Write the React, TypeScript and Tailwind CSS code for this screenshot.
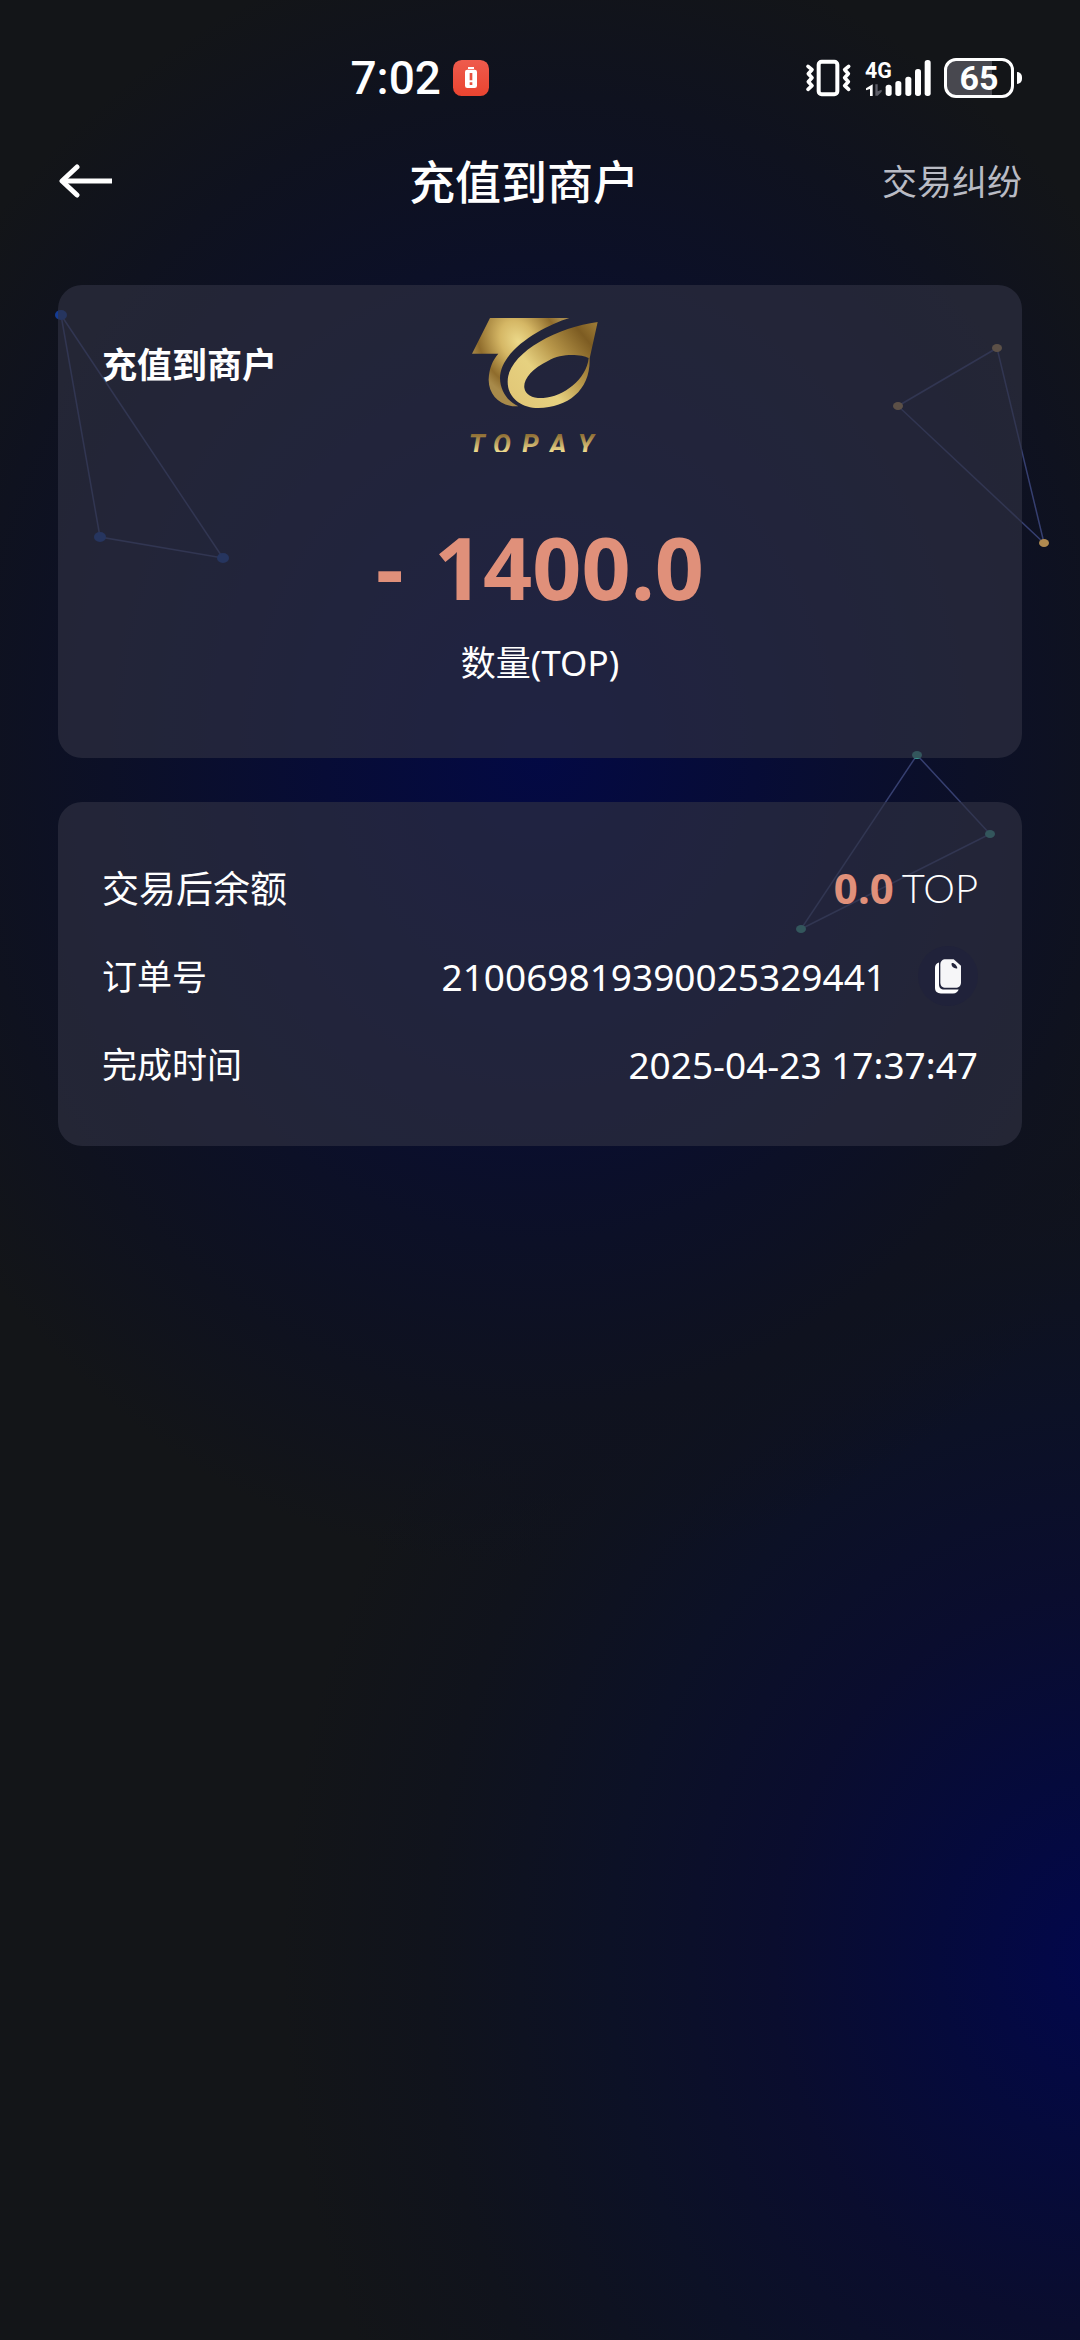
import type { ReactNode } from 'react';

function VibrateIcon() {
  return (
    <svg viewBox="70 54 141 120" className="h-10 w-[47px]" fill="none" stroke="#fff" aria-hidden="true">
      <rect x="111" y="65" width="56" height="98" rx="9" strokeWidth="12" />
      <path d="M79 79 L91 89 L80 101 L91 113 L80 125 L91 137 L79 148" strokeWidth="11" strokeLinejoin="round" strokeLinecap="round" />
      <path d="M201 79 L189 89 L200 101 L189 113 L200 125 L189 137 L201 148" strokeWidth="11" strokeLinejoin="round" strokeLinecap="round" />
    </svg>
  );
}

function SignalIcon() {
  return (
    <svg viewBox="245 54 204 120" className="h-10 w-[68px]" fill="#fff" aria-hidden="true">
      <text x="248" y="113" fontSize="64" fontWeight="700" fontFamily="Roboto, sans-serif">4G</text>
      <path d="M271 133 V168 H263 V147 L251 151 V145 Z" />
      <path d="M279 133 H286 V154 L298 149 V155 L286 167 H279 Z" fill="#5d5e68" />
      <rect x="310" y="134" width="18" height="34" rx="8" />
      <rect x="339" y="123" width="18" height="45" rx="8" />
      <rect x="369" y="110" width="18" height="58" rx="8" />
      <rect x="398" y="87" width="18" height="81" rx="8" />
      <rect x="427" y="60" width="18" height="108" rx="8" />
    </svg>
  );
}

function Battery() {
  return (
    <div className="flex items-center gap-[3px]">
      <div className="flex h-10 w-[70px] items-center justify-center rounded-xl border-[3px] border-white bg-linear-to-r from-[#48484f] from-70% to-transparent to-70% text-[34px] leading-none font-bold">
        65
      </div>
      <div className="h-3 w-[5px] rounded-r-full rounded-l-xs bg-white" />
    </div>
  );
}

function StatusBar() {
  return (
    <div className="flex h-[116px] items-end pb-[18px] font-['Roboto',sans-serif] text-white">
      <div className="flex h-10 w-1/2 items-center justify-end gap-3 pr-[51px]">
        <span className="text-[46px] leading-none font-medium">7:02</span>
        <svg viewBox="0 0 108 108" className="size-9" aria-hidden="true">
          <defs>
            <linearGradient id="alert" x1="0" y1="0" x2="0" y2="1">
              <stop offset="0" stopColor="#ee5b4d" />
              <stop offset="1" stopColor="#ea4430" />
            </linearGradient>
          </defs>
          <rect width="108" height="108" rx="26" fill="url(#alert)" />
          <path d="M45 21 H63 V27 H45 Z" fill="#fff" />
          <rect x="36" y="29" width="36" height="55" rx="7" fill="#fff" />
          <path d="M50 39 H58 V61 H50 Z M50 67 H58 V75 H50 Z" fill="#e8513f" />
        </svg>
      </div>
      <div className="flex w-1/2 items-center justify-end gap-3 pr-[58px]">
        <VibrateIcon />
        <SignalIcon />
        <Battery />
      </div>
    </div>
  );
}

function Header() {
  return (
    <header className="grid h-[130px] grid-cols-[1fr_auto_1fr] items-center px-[58px]">
      <button type="button" aria-label="返回" className="justify-self-start">
        <svg viewBox="0 0 54 34" className="h-[34px] w-[54px]" fill="none" stroke="#fff" strokeWidth="5" aria-hidden="true">
          <path d="M54 17 H5" />
          <path d="M19 3 L4 17 L19 31" strokeLinejoin="round" strokeLinecap="round" />
        </svg>
      </button>
      <h1 className="pr-8 text-[46px] leading-none font-medium">充值到商户</h1>
      <a href="#dispute" className="justify-self-end text-[35px] leading-none text-[#b9bbc4]">
        交易纠纷
      </a>
    </header>
  );
}

function Logo() {
  return (
    <svg viewBox="90 75 420 411" className="h-[137px] w-[140px]" role="img" aria-label="TOPAY">
      <defs>
        <radialGradient id="gold-t" gradientUnits="userSpaceOnUse" cx="235" cy="155" r="190" gradientTransform="translate(235 155) rotate(-30) scale(0.75 1) rotate(30) translate(-235 -155)">
          <stop offset="0" stopColor="#ecd98a" />
          <stop offset="0.35" stopColor="#d5b765" />
          <stop offset="0.8" stopColor="#8f6c2c" />
          <stop offset="1" stopColor="#a88a4a" />
        </radialGradient>
        <linearGradient id="gold-leaf" gradientUnits="userSpaceOnUse" x1="230" y1="330" x2="480" y2="120">
          <stop offset="0" stopColor="#e2c878" />
          <stop offset="0.3" stopColor="#e6d180" />
          <stop offset="0.55" stopColor="#b8974a" />
          <stop offset="0.85" stopColor="#7d5c22" />
          <stop offset="1" stopColor="#9a7834" />
        </linearGradient>
        <linearGradient id="gold-text" gradientUnits="userSpaceOnUse" x1="0" y1="434" x2="0" y2="486">
          <stop offset="0" stopColor="#8f6f35" />
          <stop offset="1" stopColor="#f0dd90" />
        </linearGradient>
      </defs>
      <path
        d="M150 84 H388 C310 108 180 180 180 265 C181 305 205 336 235 349 C185 351 145 318 146 268 C147 236 158 210 175 191 H96 Z"
        fill="url(#gold-t)"
      />
      <path
        fillRule="evenodd"
        d="M473 96 C350 112 203 190 203 275 C203 325 245 354 295 354 C385 353 452 300 449 205 Z M446 204 C425 193 365 188 325 212 C275 236 250 268 253 293 C256 315 280 326 310 324 C370 320 440 268 446 204 Z"
        fill="url(#gold-leaf)"
      />
      <text
        x="86 159 246 328 413"
        y="493"
        fontSize="80"
        fontWeight="700"
        fontStyle="italic"
        fontFamily="Roboto, sans-serif"
        fill="url(#gold-text)"
      >
        TOPAY
      </text>
    </svg>
  );
}

type Point = [number, number];

const constellations: { fill: string; rx: number; points: Point[] }[] = [
  { fill: '#143c94', rx: 6, points: [[61, 315], [100, 537], [223, 558]] },
  { fill: '#b08a50', rx: 5, points: [[997, 348], [898, 406], [1044, 543]] },
  { fill: '#3a9a8e', rx: 5, points: [[917, 755], [990, 834], [801, 929]] },
];

function Constellations() {
  return (
    <svg viewBox="0 0 1080 1000" className="pointer-events-none absolute inset-x-0 top-0 w-full" aria-hidden="true">
      {constellations.map(({ fill, rx, points }) => (
        <g key={fill}>
          <polygon points={points.join(' ')} fill="none" stroke="#363f70" strokeWidth="1.5" />
          {points.map(([x, y]) => (
            <ellipse key={x} cx={x} cy={y} rx={rx} ry={rx - 1} fill={fill} />
          ))}
        </g>
      ))}
    </svg>
  );
}

function Row({ label, children }: { label: string; children: ReactNode }) {
  return (
    <div className="group flex h-[88px] items-center justify-between">
      <dt className="text-[35px] leading-none group-first:text-[37px]">{label}</dt>
      <dd className="flex items-center text-[37px] leading-none">{children}</dd>
    </div>
  );
}

function CopyIcon() {
  return (
    <svg viewBox="0 0 78 104" className="h-[35px] w-[26px]" aria-hidden="true">
      <path d="M12 10 C4 12 0 18 0 26 V86 C0 97 7 103 18 103 H54 C63 103 69 98 71 91 H28 C17 91 12 85 12 76 Z" fill="#fff" />
      <path d="M32 0 H56 L78 20 V70 C78 80 71 86 62 86 H32 C22 86 16 80 16 70 V16 C16 6 22 0 32 0 Z" fill="#f6f6f8" />
      <path d="M50 12 C55 9 66 18 67 27 C60 30 47 22 50 12 Z" fill="#23253c" />
    </svg>
  );
}

export default function App() {
  return (
    <div className="relative isolate min-h-screen bg-[#131518] bg-[radial-gradient(ellipse_720px_820px_at_50%_750px,#030944_0%,#070c36_30%,#0c1027_60%,#0f121f_80%,transparent_100%),radial-gradient(ellipse_820px_920px_at_102%_1960px,#02074c_0%,#050a3c_20%,#0a0d2e_40%,#0c1126_60%,#10131c_82%,transparent_100%)] font-['Noto_Sans','Noto_Sans_CJK_SC',sans-serif] text-white">
      <Constellations />
      <div className="relative">
        <StatusBar />
        <Header />
        <main className="flex flex-col gap-11 px-[58px] pt-[39px]">
          <section className="grid grid-cols-[1fr_auto_1fr] items-start rounded-3xl bg-[#303142]/65 px-11 pt-[30px] pb-[74px]">
            <h2 className="pt-8 text-[35px] leading-none font-bold">充值到商户</h2>
            <Logo />
            <div className="col-span-3 mt-[72px] text-center">
              <p className="text-[86px] leading-none font-bold text-[#e0907a]">
                <span className="mr-2">-</span> 1400.0
              </p>
              <p className="mt-8 text-[35px] leading-[42px]">数量(TOP)</p>
            </div>
          </section>
          <dl className="rounded-3xl bg-[#303142]/65 px-11 pt-[42px] pb-[38px]">
            <Row label="交易后余额">
              <span className="text-[42px] font-bold text-[#e0907a]">0.0</span>
              <span className="ml-2 font-['Lato','Noto_Sans',sans-serif] text-[40px] font-light">TOP</span>
            </Row>
            <Row label="订单号">
              <span>210069819390025329441</span>
              <button
                type="button"
                aria-label="复制订单号"
                className="ml-8 flex size-[60px] items-center justify-center rounded-full bg-[#20223a]"
              >
                <CopyIcon />
              </button>
            </Row>
            <Row label="完成时间">2025-04-23 17:37:47</Row>
          </dl>
        </main>
      </div>
    </div>
  );
}
